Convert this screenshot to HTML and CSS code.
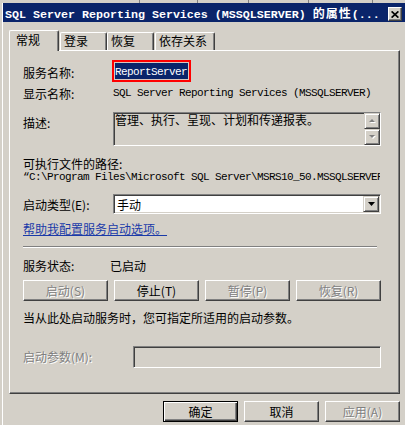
FILE: index.html
```html
<!DOCTYPE html>
<html lang="zh-CN">
<head>
<meta charset="utf-8">
<title>SQL Server Reporting Services (MSSQLSERVER) 的属性</title>
<link rel="stylesheet" href="styles.css">
</head>
<body>
<div class="strip">
  <span class="mk m1"></span><span class="mk m2"></span><span class="mk m3"></span><span class="mk m4"></span><span class="mk m5"></span>
</div>
<div class="frame">
  <div class="titlebar">
    <div class="title"><span class="t-latin">SQL Server Reporting Services (MSSQLSERVER) </span><span class="t-cjk">的属性</span><span class="t-latin">(...</span></div>
    <div class="close">
      <svg width="8" height="7" viewBox="0 0 8 7"><path d="M0.6 0.4 L7.4 6.6 M7.4 0.4 L0.6 6.6" stroke="#000" stroke-width="1.7" fill="none"/></svg>
    </div>
  </div>

  <div class="tabs">
    <div class="tab active">常规</div>
    <div class="tab t2">登录</div>
    <div class="tab t3">恢复</div>
    <div class="tab t4">依存关系</div>
  </div>

  <div class="panel">
    <div class="row r-name">
      <span class="label">服务名称:</span>
      <span class="hl-box"><span class="sel mono">ReportServer</span></span>
    </div>
    <div class="row r-display">
      <span class="label">显示名称:</span>
      <span class="mono">SQL Server Reporting Services (MSSQLSERVER)</span>
    </div>
    <div class="row r-desc">
      <span class="label">描述:</span>
      <div class="textarea">
        <div class="ta-text">管理、执行、呈现、计划和传递报表。</div>
        <div class="vscroll">
          <div class="sbtn"><svg width="7" height="5" viewBox="0 0 7 5"><polygon points="1,4 4,1 7,4" fill="#fff"/><polygon points="0,3 3,0 6,3" fill="#808080"/></svg></div>
          <div class="sbtn"><svg width="7" height="5" viewBox="0 0 7 5"><polygon points="1,1 7,1 4,4" fill="#fff"/><polygon points="0,0 6,0 3,3" fill="#808080"/></svg></div>
        </div>
      </div>
    </div>
    <div class="line r-pathlabel">可执行文件的路径:</div>
    <div class="line mono r-path">“C:\Program Files\Microsoft SQL Server\MSRS10_50.MSSQLSERVER\Reporting Services\ReportServer\bin\ReportingServicesService.exe”</div>
    <div class="row r-type">
      <span class="label">启动类型(E):</span>
      <div class="combo">
        <span class="combo-text">手动</span>
        <div class="drop"><svg width="7" height="4" viewBox="0 0 7 4"><polygon points="0,0 7,0 3.5,4" fill="#000"/></svg></div>
      </div>
    </div>
    <a class="line link" href="#">帮助我配置服务启动选项。</a>
    <div class="sep"></div>
    <div class="row r-status">
      <span class="label status-label">服务状态:</span>
      <span>已启动</span>
    </div>
    <div class="btnrow">
      <button class="btn wide" disabled>启动(S)</button>
      <button class="btn wide">停止(T)</button>
      <button class="btn wide" disabled>暂停(P)</button>
      <button class="btn wide" disabled>恢复(R)</button>
    </div>
    <div class="line r-hint">当从此处启动服务时，您可指定所适用的启动参数。</div>
    <div class="row r-param">
      <span class="label param-label disabled">启动参数(M):</span>
      <div class="input"></div>
    </div>
  </div>

  <div class="footer">
    <button class="btn default">确定</button>
    <button class="btn">取消</button>
    <button class="btn" disabled>应用(A)</button>
  </div>
</div>
</body>
</html>
```
FILE: styles.css
```css
* { box-sizing: border-box; }
html, body { margin: 0; padding: 0; }
body {
  width: 405px;
  height: 425px;
  overflow: hidden;
  background: #D4D0C8;
  font-family: "Noto Sans CJK SC", "Liberation Sans", sans-serif;
  font-size: 12px;
  line-height: 13px;
  color: #000;
}

/* strip of the window behind */
.strip { height: 3px; display: flex; }
.mk { width: 1px; height: 3px; background: #808080; }
.m1 { margin-left: 139px; }
.m2 { margin-left: 57px; }
.m3 { margin-left: 50px; }
.m4 { margin-left: 59px; }
.m5 { margin-left: 63px; }

.frame {
  margin-left: 2px;
  border-left: 1px solid #fff;
  height: 422px;
}

/* title bar */
.titlebar {
  height: 19px;
  background: #0A246A;
  display: flex;
  align-items: flex-start;
  color: #fff;
}
.title {
  flex: 1;
  padding-left: 2px;
  line-height: 19px;
  white-space: nowrap;
  overflow: hidden;
  font-weight: bold;
}
.t-latin { font-family: "Liberation Mono", monospace; font-size: 11.67px; }
.t-cjk { font-family: "Noto Sans CJK SC", sans-serif; font-size: 12px; letter-spacing: 1px; }
.close {
  flex: none;
  width: 14px;
  height: 14px;
  margin: 4px 3px 0 0;
  background: #D4D0C8;
  border: 1px solid;
  border-color: #fff #404040 #404040 #fff;
  box-shadow: inset -1px -1px 0 #808080;
  display: flex;
  align-items: center;
  justify-content: center;
}

/* tabs */
.tabs {
  display: flex;
  align-items: flex-start;
  height: 20px;
  margin-top: 8px;
  padding-left: 6px;
}
.tab {
  height: 18px;
  margin-top: 2px;
  border-top: 1px solid #fff;
  border-left: 1px solid #fff;
  border-right: 1px solid #404040;
  box-shadow: inset -1px 0 0 #808080;
  border-radius: 2px 2px 0 0;
  padding: 1px 0 0 3px;
  line-height: 13px;
  white-space: nowrap;
}
.tab.active {
  width: 50px;
  height: 21px;
  margin-top: 0;
  padding: 2px 0 0 6px;
  position: relative;
  z-index: 1;
  background: #D4D0C8;
}
.t2 { width: 47px; margin-left: 1px; }
.t3 { width: 47px; }
.t4 { width: 60px; margin-left: 1px; }

/* panel */
.panel {
  margin-left: 6px;
  width: 391px;
  height: 344px;
  border: 1px solid;
  border-color: #fff #404040 #404040 #fff;
  box-shadow: inset -1px -1px 0 #808080;
  padding-left: 13px;
  overflow: hidden;
}
.row { display: flex; align-items: flex-start; }
.line { display: block; height: 13px; line-height: 13px; white-space: nowrap; }
.label { width: 90px; flex: none; line-height: 13px; white-space: nowrap; }
.mono {
  font-family: "Liberation Mono", monospace;
  font-size: 11px;
  letter-spacing: -0.6px;
  white-space: nowrap;
}
.disabled { color: #808080; text-shadow: 1px 1px 0 #fff; }

.r-name { margin-top: 9px; height: 22px; }
.r-name .label { width: 89px; padding-top: 6px; }
.hl-box {
  width: 79px;
  height: 22px;
  border: 2px solid #f00;
  padding: 1px;
  background: #D8C8C0;
}
.sel {
  display: block;
  height: 16px;
  padding-top: 1px;
  line-height: 16px;
  background: #0A246A;
  color: #fff;
}

.r-display { margin-top: 5px; height: 13px; line-height: 13px; }

.r-desc { margin-top: 12px; height: 34px; }
.r-desc .label { padding-top: 4px; }
.textarea {
  width: 268px;
  height: 34px;
  border: 1px solid;
  border-color: #808080 #fff #fff #808080;
  box-shadow: inset 1px 1px 0 #404040;
  background: #D4D0C8;
  display: flex;
}
.ta-text { flex: 1; padding: 1px 0 0 1px; line-height: 12px; white-space: nowrap; }
.vscroll { width: 16px; flex: none; display: flex; flex-direction: column; }
.sbtn, .drop {
  width: 16px;
  height: 16px;
  background: #D4D0C8;
  border: 1px solid;
  border-color: #D4D0C8 #404040 #404040 #D4D0C8;
  box-shadow: inset 1px 1px 0 #fff, inset -1px -1px 0 #808080;
  display: flex;
  align-items: center;
  justify-content: center;
}

.r-pathlabel { margin-top: 11px; }
.r-path { margin-top: 1px; width: 357px; overflow: hidden; }

.r-type { margin-top: 10px; height: 20px; }
.r-type .label { padding-top: 4px; }
.combo {
  width: 268px;
  height: 20px;
  border: 1px solid;
  border-color: #808080 #fff #fff #808080;
  box-shadow: inset 1px 1px 0 #404040, inset -1px -1px 0 #D4D0C8;
  background: #fff;
  padding: 1px;
  display: flex;
}
.combo-text { flex: 1; padding: 2px 0 0 2px; line-height: 13px; }

.link {
  margin-top: 8px;
  width: max-content;
  color: #1a3aa8;
  text-decoration: underline;
}

.sep {
  margin-top: 11px;
  width: 354px;
  height: 2px;
  border-top: 1px solid #808080;
  border-bottom: 1px solid #fff;
}

.r-status { margin-top: 11px; height: 13px; }
.status-label { width: 87px; }

.btnrow { margin-top: 8px; display: flex; gap: 6px; height: 21px; }

.btn {
  width: 75px;
  height: 21px;
  margin: 0;
  padding: 0;
  font-family: "Noto Sans CJK SC", "Liberation Sans", sans-serif;
  font-size: 12px;
  line-height: 13px;
  color: #000;
  background: #D4D0C8;
  border: 1px solid;
  border-color: #fff #404040 #404040 #fff;
  border-radius: 0;
  box-shadow: inset -1px -1px 0 #808080;
  text-align: center;
}
.btn.wide { width: 85px; }
.btn:disabled { color: #808080; text-shadow: 1px 1px 0 #fff; }
.btn.default {
  border-color: #000;
  box-shadow: inset 1px 1px 0 #fff, inset -1px -1px 0 #404040, inset -2px -2px 0 #808080;
}

.r-hint { margin-top: 10px; }

.r-param { margin-top: 22px; height: 22px; }
.param-label { width: 110px; padding-top: 4px; }
.input {
  width: 248px;
  height: 22px;
  border: 1px solid;
  border-color: #808080 #fff #fff #808080;
  box-shadow: inset 1px 1px 0 #404040, inset -1px -1px 0 #D4D0C8;
  background: #D4D0C8;
}

.footer {
  margin-top: 7px;
  display: flex;
  justify-content: flex-end;
  gap: 6px;
  padding-right: 5px;
}
```
